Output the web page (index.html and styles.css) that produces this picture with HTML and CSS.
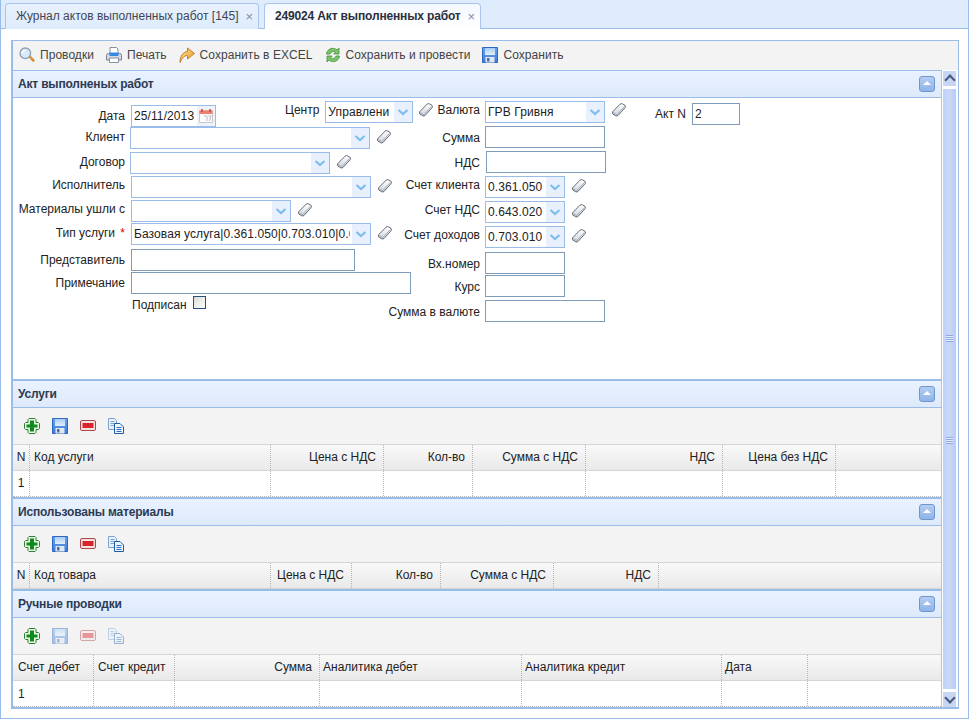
FILE: index.html
```html
<!DOCTYPE html>
<html lang="ru">
<head>
    <meta charset="UTF-8">
    <title>249024 Акт выполненных работ</title>
    <link rel="stylesheet" href="styles.css">
</head>
<body>
    <!-- общие иконки -->
    <svg class="sprite" width="0" height="0">
        <defs>
            <linearGradient id="gBlue" x1="0" y1="0" x2="0" y2="1"><stop offset="0" stop-color="#6aa6ec"/><stop offset="1" stop-color="#3a7bd8"/></linearGradient>
            <linearGradient id="gLabel" x1="0" y1="0" x2="0" y2="1"><stop offset="0" stop-color="#a5cbf5"/><stop offset="1" stop-color="#e4f0fc"/></linearGradient>
            <linearGradient id="gOrange" x1="0" y1="0" x2="1" y2="1"><stop offset="0" stop-color="#ffe08a"/><stop offset="1" stop-color="#e79a2c"/></linearGradient>
            <linearGradient id="gEraser" x1="0" y1="0" x2="0" y2="1"><stop offset="0" stop-color="#ffffff"/><stop offset="1" stop-color="#ccd2dc"/></linearGradient>
            <symbol id="i-search" viewBox="0 0 16 16">
                <path d="M9.500 9.500l1.400-1 4.400 4.400c.5.700-.8 2-1.500 1.500z" fill="#e8932b" stroke="#b9701c" stroke-width=".6"/>
                <circle cx="6.300" cy="6.300" r="5.300" fill="#d8e9f8" stroke="#8aa0b8" stroke-width="1.300"/>
                <path d="M3.300 6.300a3 3 0 0 1 3-3" fill="none" stroke="#fff" stroke-width="1.300"/>
            </symbol>
            <symbol id="i-print" viewBox="0 0 16 16">
                <path d="M4 .5h6.500L12 2v5H4z" fill="#fff" stroke="#8793a3"/>
                <path d="M.5 8.500Q.5 6.500 2.500 6.500h11q2 0 2 2v4.500H.5z" fill="#d5dae2" stroke="#76818f"/>
                <path d="M3.500 5.500h9v3.500h-9z" fill="#2f8ae0"/>
                <path d="M3.500 11h9v4.500h-9z" fill="#fff" stroke="#8793a3"/>
            </symbol>
            <symbol id="i-share" viewBox="0 0 16 16">
                <path d="M1 15.500C1 9 4 5 8.500 4.500V1L15.500 6.500l-7 5.500V8.500C5.500 8.500 3 11 1 15.500z" fill="url(#gOrange)" stroke="#b9771d" stroke-width=".9" stroke-linejoin="round"/>
            </symbol>
            <symbol id="i-refresh" viewBox="0 0 16 16">
                <path d="M1.500 7C2 3 5.500 1 8.500 1.400c1.400.2 2.600.7 3.500 1.600L14 1v6H8.800l1.700-1.900C9 3.800 6 4.200 5 7z" fill="#7cc36a" stroke="#3f8f3a" stroke-width=".8" stroke-linejoin="round"/>
                <path d="M14.500 9c-.5 4-4 6-7 5.600-1.400-.2-2.600-.7-3.500-1.600L2 15V9h5.200l-1.700 1.900C7 12.200 10 11.800 11 9z" fill="#7cc36a" stroke="#3f8f3a" stroke-width=".8" stroke-linejoin="round"/>
            </symbol>
            <symbol id="i-save" viewBox="0 0 16 16">
                <path d="M.5 .5h15v15H.5z" fill="url(#gBlue)" stroke="#2f68c0"/>
                <path d="M3 1h10v7H3z" fill="url(#gLabel)"/>
                <path d="M3.500 10h9v5.500h-9z" fill="#e3e8f0"/>
                <path d="M5 11h2.500v3.500H5z" fill="#4a6fa8"/>
            </symbol>
            <symbol id="i-plus" viewBox="0 0 16 16">
                <path d="M5 .5h6l1 1v3h2.500l1 1v5l-1 1H12v3l-1 1H5l-1-1v-3H1.500l-1-1v-5l1-1H4v-3z" fill="#eaf6e6" stroke="#2f7f33"/>
                <path d="M6 2.500h4v4h3.500v3H10v4H6v-4H2.500v-3H6z" fill="#0f8a1c"/>
            </symbol>
            <symbol id="i-minus" viewBox="0 0 16 16">
                <rect x=".5" y="2.500" width="15" height="10" rx="1.500" fill="#f4e2e2" stroke="#a84848"/>
                <path d="M2.500 5h11v5h-11z" fill="#d8252c"/>
            </symbol>
            <symbol id="i-copy" viewBox="0 0 16 16">
                <path d="M.5 .5h6l2 2v9h-8z" fill="#e8f1fb" stroke="#7fa3d0"/>
                <path d="M2.500 3.500h4M2.500 5.500h4M2.500 7.500h4" stroke="#7fa3d0"/>
                <path d="M6.500 5.500h5.500l3.500 3.500v6.500h-9z" fill="#eef5fd" stroke="#1f5ca8"/>
                <path d="M8.500 9.500h5M8.500 11.500h5M8.500 13.500h5" stroke="#2a6fc0"/>
            </symbol>
            <symbol id="i-eraser" viewBox="0 0 14 14">
                <path d="M.7 8.700L8 1.200Q9.200.3 10.400.8L13 2.300Q14 3.300 13.200 4.600L6.200 12.300Q5 13.400 3.800 12.800L1 11.200Q0 10 .7 8.700z" fill="url(#gEraser)" stroke="#565c68" stroke-width=".9"/>
                <path d="M1.300 9.500L4.800 11.600 12.700 3.200" fill="none" stroke="#99a0ad" stroke-width=".8"/>
            </symbol>
            <symbol id="i-calendar" viewBox="0 0 16 16">
                <path d="M1.500 2.500h13v12h-13z" fill="#fbfbfb" stroke="#c9c9c9"/>
                <path d="M1.500 2.500h13v3.500h-13z" fill="#ef7f6e"/>
                <path d="M4 1v3M12 1v3" stroke="#c4473a" stroke-width="1.500"/>
                <path d="M6 8h3v5M10.500 8H13l-1.500 5" fill="none" stroke="#b9bdc4"/>
            </symbol>
            <symbol id="i-chevron" viewBox="0 0 18 20">
                <path d="M4.500 8L9 12l4.500-4" fill="none" stroke="#7cbdee" stroke-width="2.200"/>
            </symbol>
        </defs>
    </svg>

    <div class="window">
        <div class="tabs">
            <div class="tab tab-journal"><span>Журнал актов выполненных работ [145]</span><span class="tab-close">×</span></div>
            <div class="tab tab-act active"><span>249024 Акт выполненных работ</span><span class="tab-close">×</span></div>
        </div>

        <div class="tab-body">
            <div class="panel">
                <div class="toolbar">
                    <span class="tool"><svg class="icon"><use href="#i-search"/></svg>Проводки</span>
                    <span class="tool"><svg class="icon"><use href="#i-print"/></svg>Печать</span>
                    <span class="tool"><svg class="icon"><use href="#i-share"/></svg>Сохранить в EXCEL</span>
                    <span class="tool"><svg class="icon"><use href="#i-refresh"/></svg>Сохранить и провести</span>
                    <span class="tool"><svg class="icon"><use href="#i-save"/></svg>Сохранить</span>
                </div>

                <div class="panel-main">
                    <div class="sections">
                        <!-- шапка акта -->
                        <div class="sec-header first"><span>Акт выполненых работ</span><span class="collapse"></span></div>
                        <div class="form">
                            <div class="col-a">
                                <div class="label label-date">Дата</div>
                                <div class="top-fields">
                                    <div class="field date-field w85">
                                        <input type="text" value="25/11/2013">
                                        <span class="cal"><svg class="icon"><use href="#i-calendar"/></svg></span>
                                    </div>
                                    <div class="center-group">
                                        <span class="center-label">Центр</span>
                                        <div class="field combo w88"><input type="text" value="Управлени"><span class="trigger"><svg><use href="#i-chevron"/></svg></span></div>
                                    </div>
                                </div>

                                <div class="label down1">Клиент</div>
                                <div class="line shift-left">
                                    <div class="field combo w240"><input type="text"><span class="trigger"><svg><use href="#i-chevron"/></svg></span></div>
                                    <svg class="eraser"><use href="#i-eraser"/></svg>
                                </div>

                                <div class="label down1">Договор</div>
                                <div class="line shift-left">
                                    <div class="field combo w200"><input type="text"><span class="trigger"><svg><use href="#i-chevron"/></svg></span></div>
                                    <svg class="eraser"><use href="#i-eraser"/></svg>
                                </div>

                                <div class="label">Исполнитель</div>
                                <div class="line">
                                    <div class="field combo w240"><input type="text"><span class="trigger"><svg><use href="#i-chevron"/></svg></span></div>
                                    <svg class="eraser"><use href="#i-eraser"/></svg>
                                </div>

                                <div class="label">Материалы ушли с</div>
                                <div class="line">
                                    <div class="field combo w160"><input type="text"><span class="trigger"><svg><use href="#i-chevron"/></svg></span></div>
                                    <svg class="eraser"><use href="#i-eraser"/></svg>
                                </div>

                                <div class="label down1">Тип услуги <span class="req">*</span></div>
                                <div class="line">
                                    <div class="field combo w240"><input type="text" value="Базовая услуга|0.361.050|0.703.010|0.643.020"><span class="trigger"><svg><use href="#i-chevron"/></svg></span></div>
                                    <svg class="eraser"><use href="#i-eraser"/></svg>
                                </div>

                                <div class="label down2">Представитель</div>
                                <div class="line"><div class="field plain w224"><input type="text"></div></div>

                                <div class="label down2">Примечание</div>
                                <div class="line"><div class="field plain w280"><input type="text"></div></div>

                                <div></div>
                                <div class="signed">Подписан <span class="checkbox"></span></div>
                            </div>

                            <div class="col-b">
                                <div class="label currency"><svg class="eraser"><use href="#i-eraser"/></svg><span>Валюта</span></div>
                                <div class="line">
                                    <div class="field combo w120"><input type="text" value="ГРВ Гривня"><span class="trigger"><svg><use href="#i-chevron"/></svg></span></div>
                                    <svg class="eraser eraser-high"><use href="#i-eraser"/></svg>
                                </div>

                                <div class="label down3">Сумма</div>
                                <div class="line"><div class="field plain w120"><input type="text"></div></div>

                                <div class="label down3">НДС</div>
                                <div class="line shift-right"><div class="field plain w120"><input type="text"></div></div>

                                <div class="label">Счет клиента</div>
                                <div class="line">
                                    <div class="field combo w80"><input type="text" value="0.361.050"><span class="trigger"><svg><use href="#i-chevron"/></svg></span></div>
                                    <svg class="eraser"><use href="#i-eraser"/></svg>
                                </div>

                                <div class="label">Счет НДС</div>
                                <div class="line">
                                    <div class="field combo w80"><input type="text" value="0.643.020"><span class="trigger"><svg><use href="#i-chevron"/></svg></span></div>
                                    <svg class="eraser"><use href="#i-eraser"/></svg>
                                </div>

                                <div class="label">Счет доходов</div>
                                <div class="line">
                                    <div class="field combo w80"><input type="text" value="0.703.010"><span class="trigger"><svg><use href="#i-chevron"/></svg></span></div>
                                    <svg class="eraser"><use href="#i-eraser"/></svg>
                                </div>

                                <div class="label down3">Вх.номер</div>
                                <div class="line"><div class="field plain w80"><input type="text"></div></div>

                                <div class="label down3">Курс</div>
                                <div class="line"><div class="field plain w80"><input type="text"></div></div>

                                <div class="label down3">Сумма в валюте</div>
                                <div class="line"><div class="field plain w120"><input type="text"></div></div>
                            </div>

                            <div class="col-c">
                                <span>Акт N</span>
                                <div class="field plain w48"><input type="text" value="2"></div>
                            </div>
                        </div>

                        <!-- услуги -->
                        <div class="sec-header"><span>Услуги</span><span class="collapse"></span></div>
                        <div class="grid-tools">
                            <svg class="icon"><use href="#i-plus"/></svg>
                            <svg class="icon"><use href="#i-save"/></svg>
                            <svg class="icon"><use href="#i-minus"/></svg>
                            <svg class="icon"><use href="#i-copy"/></svg>
                        </div>
                        <div class="grid-head cols-services">
                            <div class="cell num">N</div>
                            <div class="cell">Код услуги</div>
                            <div class="cell right">Цена с НДС</div>
                            <div class="cell right">Кол-во</div>
                            <div class="cell right">Сумма с НДС</div>
                            <div class="cell right">НДС</div>
                            <div class="cell right">Цена без НДС</div>
                            <div class="cell last"></div>
                        </div>
                        <div class="grid-row cols-services">
                            <div class="cell num">1</div>
                            <div class="cell"></div>
                            <div class="cell"></div>
                            <div class="cell"></div>
                            <div class="cell"></div>
                            <div class="cell"></div>
                            <div class="cell"></div>
                            <div class="cell last"></div>
                        </div>
                        <div class="sec-break"></div>

                        <!-- материалы -->
                        <div class="sec-header"><span>Использованы материалы</span><span class="collapse"></span></div>
                        <div class="grid-tools">
                            <svg class="icon"><use href="#i-plus"/></svg>
                            <svg class="icon"><use href="#i-save"/></svg>
                            <svg class="icon"><use href="#i-minus"/></svg>
                            <svg class="icon"><use href="#i-copy"/></svg>
                        </div>
                        <div class="grid-head cols-materials">
                            <div class="cell num">N</div>
                            <div class="cell">Код товара</div>
                            <div class="cell right">Цена с НДС</div>
                            <div class="cell right">Кол-во</div>
                            <div class="cell right">Сумма с НДС</div>
                            <div class="cell right">НДС</div>
                            <div class="cell last"></div>
                        </div>
                        <div class="sec-break"></div>

                        <!-- ручные проводки -->
                        <div class="sec-header"><span>Ручные проводки</span><span class="collapse"></span></div>
                        <div class="grid-tools">
                            <svg class="icon"><use href="#i-plus"/></svg>
                            <svg class="icon off"><use href="#i-save"/></svg>
                            <svg class="icon off"><use href="#i-minus"/></svg>
                            <svg class="icon off"><use href="#i-copy"/></svg>
                        </div>
                        <div class="grid-head cols-manual">
                            <div class="cell">Счет дебет</div>
                            <div class="cell">Счет кредит</div>
                            <div class="cell right">Сумма</div>
                            <div class="cell">Аналитика дебет</div>
                            <div class="cell">Аналитика кредит</div>
                            <div class="cell">Дата</div>
                            <div class="cell last"></div>
                        </div>
                        <div class="grid-row cols-manual">
                            <div class="cell">1</div>
                            <div class="cell"></div>
                            <div class="cell"></div>
                            <div class="cell"></div>
                            <div class="cell"></div>
                            <div class="cell"></div>
                            <div class="cell last"></div>
                        </div>
                    </div>

                    <div class="scrollbar">
                        <div class="scroll-btn up"></div>
                        <div class="scroll-thumb">
                            <span class="grip"></span>
                            <span class="grip"></span>
                        </div>
                        <div class="scroll-btn down"></div>
                    </div>
                </div>
            </div>
        </div>
    </div>
</body>
</html>
```

FILE: styles.css
```css
* {
    box-sizing: border-box;
    margin: 0;
    padding: 0;
}
body {
    font-family: "Liberation Sans", Arial, sans-serif;
    font-size: 12px;
    color: #222;
    background: #fff;
}
.sprite {
    position: absolute;
}
.window {
    width: 969px;
    height: 719px;
    display: flex;
    flex-direction: column;
    border: 1px solid #99bce8;
    border-top: none;
}

/* вкладки */
.tabs {
    height: 29px;
    flex: none;
    display: flex;
    gap: 5px;
    padding: 3px 0 0 4px;
    background: #deecfd;
    border-bottom: 1px solid #99bce8;
}
.tab {
    height: 26px;
    display: flex;
    align-items: center;
    justify-content: space-between;
    padding: 0 5px 1px 10px;
    color: #3f4757;
    background: linear-gradient(#e8f1fc, #deecfd);
    border: 1px solid #a9c5ea;
    border-bottom: none;
    border-radius: 4px 4px 0 0;
}
.tab-journal {
    width: 254px;
}
.tab-act {
    width: 217px;
}
.tab.active {
    height: 26px;
    color: #2b2f3a;
    font-weight: bold;
    letter-spacing: -.15px;
    background: linear-gradient(#f3f8ff, #fff);
}
.tab-close {
    font-weight: normal;
    font-size: 13px;
    color: #7d8ea6;
}
.tab-body {
    flex: 1;
    padding: 11px 9px 9px 10px;
    background: #fff;
}

/* основная панель */
.panel {
    height: 669px;
    display: flex;
    flex-direction: column;
    border: 1px solid #99bce8;
    border-width: 1px 1px 2px 2px;
}
.toolbar {
    height: 29px;
    flex: none;
    display: flex;
    align-items: center;
    gap: 12px;
    padding: 0 0 1px 6px;
    color: #444;
    letter-spacing: .05px;
    background: #f3f3f3;
}
.tool {
    display: flex;
    align-items: center;
    gap: 5px;
}
.icon {
    width: 16px;
    height: 16px;
    flex: none;
}
.panel-main {
    flex: 1;
    display: flex;
    min-height: 0;
}
.sections {
    width: 928px;
    flex: none;
    display: flex;
    flex-direction: column;
}
.sec-header {
    height: 27px;
    flex: none;
    display: flex;
    align-items: center;
    justify-content: space-between;
    padding: 0 6px 1px 5px;
    font-weight: bold;
    letter-spacing: -.18px;
    color: #2d3a52;
    background: linear-gradient(#e9f2ff, #dde9fb);
    border-bottom: 1px solid #99bce8;
}
.sec-header.first {
    height: 28px;
    border-top: 1px solid #99bce8;
}
.collapse {
    width: 16px;
    height: 16px;
    position: relative;
    border: 1px solid #6f96cf;
    border-radius: 3px;
    background: linear-gradient(#b3cdf3, #8fb4e8);
}
.collapse::after {
    content: "";
    position: absolute;
    left: 3px;
    top: 4px;
    border-left: 4px solid transparent;
    border-right: 4px solid transparent;
    border-bottom: 4px solid #fff;
}
.sec-break {
    height: 2px;
    flex: none;
    background: #99bce8;
}

/* форма акта */
.form {
    height: 283px;
    flex: none;
    display: flex;
    padding-top: 3px;
    border-bottom: 2px solid #99bce8;
}
.col-a,
.col-b {
    display: grid;
    align-items: start;
}
.col-a {
    width: 375px;
    flex: none;
    grid-template-columns: 112px 1fr;
    grid-template-rows: 26px 25px 24px 24px 23px 26px 23px 25px 22px;
}
.col-b {
    width: 300px;
    flex: none;
    grid-template-columns: 92px 1fr;
    grid-template-rows: 25px 25px 25px 25px 25px 26px 23px 25px 22px;
}
.col-c {
    display: flex;
    align-items: center;
    gap: 6px;
    height: 22px;
    margin: 2px 0 0 -33px;
}
.label {
    height: 18px;
    line-height: 18px;
    text-align: right;
    white-space: nowrap;
}
.label-date {
    margin-top: 6px;
}
.down1 {
    margin-top: 1px;
}
.down2 {
    margin-top: 2px;
}
.down3 {
    margin-top: 3px;
}
.line {
    display: flex;
    align-items: flex-start;
    margin-left: 6px;
}
.shift-left {
    margin-left: 5px;
}
.col-b .line {
    margin-left: 5px;
}
.col-b .shift-right {
    margin-left: 6px;
}
.top-fields {
    height: 26px;
    display: flex;
    margin-left: 6px;
}
.date-field {
    margin-top: 4px;
}
.center-group {
    display: flex;
    align-items: flex-start;
    gap: 6px;
    margin-left: 69px;
}
.center-label {
    line-height: 18px;
}
.field {
    height: 22px;
    flex: none;
    display: flex;
    background: #fff;
    border: 1px solid #99bce8;
}
.field input {
    flex: 1;
    width: 100%;
    min-width: 0;
    height: 20px;
    padding: 0 2px;
    border: none;
    outline: none;
    background: transparent;
    font-family: "Liberation Sans", Arial, sans-serif;
    font-size: 12px;
    letter-spacing: .1px;
    color: #222;
}
.field.plain {
    border-color: #7f9db9;
}
.trigger {
    width: 18px;
    flex: none;
    background: #e8f0fd;
}
.trigger svg {
    display: block;
    width: 18px;
    height: 20px;
}
.cal {
    width: 18px;
    flex: none;
    padding: 2px 1px;
    background: #eef3fb;
}
.cal .icon {
    display: block;
}
.w48 { width: 48px; }
.w80 { width: 80px; }
.w85 { width: 85px; }
.w88 { width: 88px; }
.w120 { width: 120px; }
.w160 { width: 160px; }
.w200 { width: 200px; }
.w224 { width: 224px; }
.w240 { width: 240px; }
.w280 { width: 280px; }
.eraser {
    width: 14px;
    height: 14px;
    flex: none;
    margin: 3px 0 0 7px;
}
.eraser-high {
    margin-top: 2px;
}
.currency {
    display: flex;
    justify-content: flex-end;
    gap: 5px;
    margin-left: -66px;
}
.currency .eraser {
    margin: 2px 0 0;
}
.req {
    color: #d00;
    margin-left: 2px;
}
.signed {
    display: flex;
    align-items: flex-start;
    gap: 6px;
    margin-left: 7px;
    line-height: 16px;
}
.checkbox {
    width: 13px;
    height: 13px;
    margin-top: -1px;
    background: linear-gradient(135deg, #dcdcd6, #fff);
    border: 1px solid #2a4f7c;
}

/* таблицы */
.grid-tools {
    height: 36px;
    flex: none;
    display: flex;
    align-items: center;
    gap: 12px;
    padding: 0 0 0 11px;
    background: #f3f3f3;
}
.icon.off {
    opacity: .45;
}
.grid-head,
.grid-row {
    flex: none;
    display: grid;
}
.grid-head {
    height: 27px;
    background: linear-gradient(#f9f9f9, #e9e9ea);
    border-top: 1px solid #d5d5d5;
    border-bottom: 1px solid #d5d5d5;
}
.grid-row {
    height: 26px;
    background: #fff;
    border-bottom: 1px dotted #b5b5b5;
}
.cols-services {
    grid-template-columns: 17px 241px 113px 89px 113px 137px 113px 1fr;
}
.cols-materials {
    grid-template-columns: 17px 241px 81px 89px 113px 105px 1fr;
}
.cols-manual {
    grid-template-columns: 81px 81px 145px 202px 200px 86px 1fr;
}
.cell {
    padding: 0 7px 0 4px;
    line-height: 24px;
    white-space: nowrap;
    overflow: hidden;
    border-right: 1px dotted #b5b5b5;
}
.grid-row .cell {
    padding-top: 1px;
}
.cols-manual .cell:first-child {
    padding-left: 5px;
}
.cols-manual .cell:nth-child(n+4) {
    padding-left: 3px;
}
.cell.right {
    text-align: right;
}
.cell.num {
    padding: 0;
    text-align: center;
}
.cell.last {
    border-right: none;
}

/* полоса прокрутки */
.scrollbar {
    width: 16px;
    flex: none;
    display: flex;
    flex-direction: column;
    padding: 1px 1px 0 1px;
    gap: 3px;
    background: #fff;
    border-left: 1px solid #a9c5ea;
}
.scroll-btn {
    height: 15px;
    flex: none;
    position: relative;
    background: #c8d6f4;
}
.scroll-btn::after {
    content: "";
    position: absolute;
    left: 3px;
    width: 6px;
    height: 6px;
    border: solid #45587e;
    border-width: 2px 0 0 2px;
}
.scroll-btn.up::after {
    top: 5px;
    transform: rotate(45deg);
}
.scroll-btn.down::after {
    top: 2px;
    transform: rotate(225deg);
}
.scroll-thumb {
    flex: 1;
    position: relative;
    display: flex;
    flex-direction: column;
    align-items: center;
    gap: 95px;
    padding-top: 246px;
    background: linear-gradient(90deg, #c0d0f8, #c9d8fa 50%, #b9caf2);
}
.grip {
    width: 7px;
    height: 7px;
    flex: none;
    background: repeating-linear-gradient(#8fa9e6 0 1px, #e6eefc 1px 2px);
}
```
